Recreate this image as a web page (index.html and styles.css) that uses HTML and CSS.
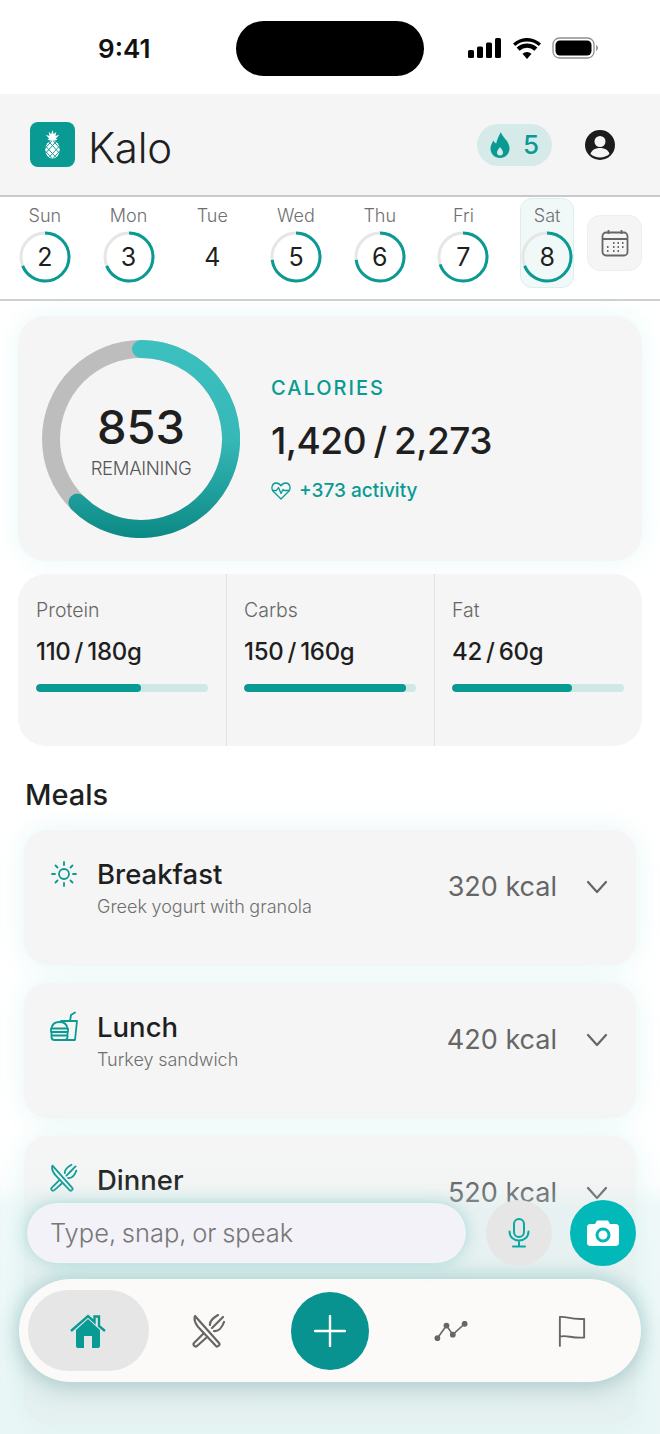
FILE: index.html
```html
<!DOCTYPE html>
<html lang="en">
<head>
  <meta charset="UTF-8">
  <meta name="viewport" content="width=device-width, initial-scale=1.0">
  <title>Kalo</title>
  <link rel="stylesheet" href="styles.css">
</head>
<body>
<div class="phone">
  <!-- Status bar -->
  <div class="status-bar">
    <span class="clock">9:41</span>
    <div class="island"></div>
    <div class="status-icons">
      <svg width="34" height="20" viewBox="0 0 34 20"><rect x="0" y="12" width="6" height="8" rx="1.5"/><rect x="9" y="8.500" width="6" height="11.500" rx="1.5"/><rect x="18" y="4.500" width="6" height="15.500" rx="1.5"/><rect x="27" y="0" width="6" height="20" rx="1.5"/></svg>
      <svg width="28" height="21" viewBox="0 0 28 21"><path d="M14 21l-4.500-5.200a6.500 6.500 0 0 1 9 0z"/><path d="M6.600 12.700l-3-3.300a15.500 15.500 0 0 1 20.800 0l-3 3.300a11 11 0 0 0-14.800 0z"/><path d="M2.300 8L0 5.500a20.500 20.500 0 0 1 28 0L25.700 8a17.500 17.500 0 0 0-23.400 0z"/></svg>
      <svg width="46" height="22" viewBox="0 0 46 22"><rect x="1" y="1" width="41" height="20" rx="6.500" fill="none" stroke="#8f8f8f" stroke-width="1.300"/><rect x="3.500" y="3.500" width="36" height="15" rx="4.500"/><path d="M44 8v6c1.200-.4 2-1.600 2-3s-.8-2.600-2-3z" fill="#9a9a9a"/></svg>
    </div>
  </div>

  <!-- Header -->
  <header class="top-header">
    <div class="brand">
      <div class="logo">
        <svg width="17" height="29" viewBox="0 0 20 34">
          <path d="M10 0l1.500 5 3-3-1 5 4.500-1.500-4 4.500 2 1-4 1.500H8L4 11l2-1-4-4.500L6.500 7l-1-5 3 3z" fill="#fff"/>
          <ellipse cx="10" cy="23" rx="8.500" ry="10.500" fill="#fff"/>
          <path d="M2 19l12 13M2 25l7 8M6 14l12 13M11 13l8 9M18 19L6 32M18 25l-7 8M14 14L2 27M9 13l-8 9" stroke="#0a9a94" stroke-width="1.100"/>
        </svg>
      </div>
      <span class="brand-name">Kalo</span>
    </div>
    <div class="streak">
      <svg width="20" height="26" viewBox="0 0 20 26"><path fill-rule="evenodd" d="M11 0c.6 5 8.500 8.500 8.500 16.500C19.500 22 15.300 26 10 26S.5 22 .5 16.500c0-3.500 1.700-5.500 3-8 .7 1.500 1.500 2.600 2.700 3C7 8 8.500 4 11 0zM10 15c-1.500 2.200-3 3.600-3 5.500a3 3 0 0 0 6 0c0-1.900-1.500-3.300-3-5.500z"/></svg>
      <span>5</span>
    </div>
    <svg class="profile" width="30" height="30" viewBox="0 0 30 30"><circle cx="15" cy="15" r="15" fill="#1c1c1c"/><circle cx="15" cy="11.500" r="5.500" fill="#f5f5f5"/><path d="M5.500 24c1-4 5-6 9.500-6s8.500 2 9.500 6c-2.500 2.300-5.800 3.500-9.500 3.500S8 26.300 5.500 24z" fill="#f5f5f5"/></svg>
  </header>

  <!-- Week strip -->
  <nav class="week">
    <div class="days">
      <div class="day"><span class="day-name">Sun</span><div class="ring"><svg width="52" height="52" viewBox="0 0 52 52"><circle class="ring-track" cx="26" cy="26" r="24"/><circle class="ring-fill" cx="26" cy="26" r="24" pathLength="100" stroke-dasharray="69 100"/></svg><span>2</span></div></div>
      <div class="day"><span class="day-name">Mon</span><div class="ring"><svg width="52" height="52" viewBox="0 0 52 52"><circle class="ring-track" cx="26" cy="26" r="24"/><circle class="ring-fill" cx="26" cy="26" r="24" pathLength="100" stroke-dasharray="69 100"/></svg><span>3</span></div></div>
      <div class="day"><span class="day-name">Tue</span><div class="ring"><span>4</span></div></div>
      <div class="day"><span class="day-name">Wed</span><div class="ring"><svg width="52" height="52" viewBox="0 0 52 52"><circle class="ring-track" cx="26" cy="26" r="24"/><circle class="ring-fill" cx="26" cy="26" r="24" pathLength="100" stroke-dasharray="73 100"/></svg><span>5</span></div></div>
      <div class="day"><span class="day-name">Thu</span><div class="ring"><svg width="52" height="52" viewBox="0 0 52 52"><circle class="ring-track" cx="26" cy="26" r="24"/><circle class="ring-fill" cx="26" cy="26" r="24" pathLength="100" stroke-dasharray="73 100"/></svg><span>6</span></div></div>
      <div class="day"><span class="day-name">Fri</span><div class="ring"><svg width="52" height="52" viewBox="0 0 52 52"><circle class="ring-track" cx="26" cy="26" r="24"/><circle class="ring-fill" cx="26" cy="26" r="24" pathLength="100" stroke-dasharray="70 100"/></svg><span>7</span></div></div>
      <div class="day day-active"><span class="day-name">Sat</span><div class="ring"><svg width="52" height="52" viewBox="0 0 52 52"><circle class="ring-track" cx="26" cy="26" r="24"/><circle class="ring-fill" cx="26" cy="26" r="24" pathLength="100" stroke-dasharray="69 100"/></svg><span>8</span></div></div>
    </div>
    <div class="calendar-btn">
      <svg width="28" height="28" viewBox="0 0 28 28" fill="none" stroke="#666" stroke-width="1.800"><rect x="1.500" y="3.500" width="25" height="23" rx="3.500"/><path d="M1.500 10h25M7.500 1v4M20.500 1v4"/><path d="M12 14h1.500M16.500 14H18M21 14h1.500M6 18h1.500M12 18h1.500M16.500 18H18M21 18h1.500M6 22h1.500M12 22h1.500M16.500 22H18" stroke-width="2"/></svg>
    </div>
  </nav>

  <main class="content">
    <!-- Calories -->
    <section class="card calories">
      <div class="calorie-ring">
        <svg width="198" height="198" viewBox="0 0 198 198" fill="none">
          <defs>
            <linearGradient id="ringGrad" gradientUnits="userSpaceOnUse" x1="99" y1="0" x2="99" y2="198">
              <stop offset="0" stop-color="#3cc0c0"/>
              <stop offset="0.5" stop-color="#36b8b7"/>
              <stop offset="1" stop-color="#0b8985"/>
            </linearGradient>
          </defs>
          <circle cx="99" cy="99" r="90" stroke="#bdbdbd" stroke-width="18"/>
          <path d="M99 9A90 90 0 1 1 35.400 162.600" stroke="url(#ringGrad)" stroke-width="18" stroke-linecap="round"/>
        </svg>
        <div class="ring-label">
          <span class="remaining-num">853</span>
          <span class="remaining-text">REMAINING</span>
        </div>
      </div>
      <div class="calorie-info">
        <span class="calorie-title">CALORIES</span>
        <span class="calorie-total">1,420 / 2,273</span>
        <span class="calorie-activity">
          <svg width="20" height="18" viewBox="0 0 20 18" fill="none" stroke="#0a9a94" stroke-width="1.300" stroke-linejoin="round"><path d="M10 17L2.200 9.200C-.2 6.500 1 1.200 5 1c2.200-.1 3.800.9 5 2.800C11.200 1.900 12.800.9 15 1c4 .2 5.200 5.500 2.800 8.200z"/><path d="M1.500 8.500h4l2-3 2.500 6 2-4 1 1h5"/></svg>
          +373 activity
        </span>
      </div>
    </section>

    <!-- Macros -->
    <section class="card macros">
      <div class="macro">
        <span class="macro-name">Protein</span>
        <span class="macro-value">110 / 180g</span>
        <div class="bar"><div class="bar-fill" style="width: 61%"></div></div>
      </div>
      <div class="macro">
        <span class="macro-name">Carbs</span>
        <span class="macro-value">150 / 160g</span>
        <div class="bar"><div class="bar-fill" style="width: 94%"></div></div>
      </div>
      <div class="macro">
        <span class="macro-name">Fat</span>
        <span class="macro-value">42 / 60g</span>
        <div class="bar"><div class="bar-fill" style="width: 70%"></div></div>
      </div>
    </section>

    <!-- Meals -->
    <h2 class="meals-title">Meals</h2>
    <section class="meals">
      <article class="meal">
        <svg class="meal-icon" width="28" height="28" viewBox="0 0 28 28" fill="none" stroke="#0a9a94" stroke-width="1.800" stroke-linecap="round"><circle cx="14" cy="14" r="5"/><path d="M14 2v3M14 23v3M2 14h3M23 14h3M5.500 5.500l2 2M20.500 20.500l2 2M5.500 22.500l2-2M20.500 7.500l2-2"/></svg>
        <div class="meal-text">
          <span class="meal-name">Breakfast</span>
          <span class="meal-desc">Greek yogurt with granola</span>
        </div>
        <span class="meal-kcal">320 kcal</span>
        <svg class="chevron" width="22" height="14" viewBox="0 0 22 14" fill="none" stroke="#666" stroke-width="2.200" stroke-linecap="round" stroke-linejoin="round"><path d="M2 2l9 10 9-10"/></svg>
      </article>
      <article class="meal">
        <svg class="meal-icon meal-icon-up" width="28" height="30" viewBox="0 0 28 30" fill="none" stroke="#0a9a94" stroke-width="1.800" stroke-linecap="round" stroke-linejoin="round"><path d="M11 10h16l-2 19H16M20 10l1-6 4-2.500"/><path d="M1.500 17.500C2 13.500 5 11 9.500 11s7.500 2.500 8 6.500zM1 17.500h17V21H1zM1.500 21v5c0 1.700 1.300 3 3 3h10c1.700 0 3-1.300 3-3v-5M1.500 24.500h16"/></svg>
        <div class="meal-text">
          <span class="meal-name">Lunch</span>
          <span class="meal-desc">Turkey sandwich</span>
        </div>
        <span class="meal-kcal">420 kcal</span>
        <svg class="chevron" width="22" height="14" viewBox="0 0 22 14" fill="none" stroke="#666" stroke-width="2.200" stroke-linecap="round" stroke-linejoin="round"><path d="M2 2l9 10 9-10"/></svg>
      </article>
      <article class="meal meal-last">
        <svg class="meal-icon meal-icon-up" width="28" height="28" viewBox="0 0 34 34" fill="none" stroke="#0a9a94" stroke-width="2.200" stroke-linecap="round" stroke-linejoin="round"><path d="M3 2C1.500 6.500 4 11 8 15l16 17c1.500 1.500 4.500-1 3-3z"/><path d="M11 20L2 29c-1.500 2 1 4.500 3 3l9-8M20 14l11-11M22 17c4 .5 8-3 10-9M18 11c-.5-3 3-7 8-10M24 10l5-5"/></svg>
        <div class="meal-text">
          <span class="meal-name">Dinner</span>
        </div>
        <span class="meal-kcal">520 kcal</span>
        <svg class="chevron" width="22" height="14" viewBox="0 0 22 14" fill="none" stroke="#666" stroke-width="2.200" stroke-linecap="round" stroke-linejoin="round"><path d="M2 2l9 10 9-10"/></svg>
      </article>
    </section>
  </main>

  <!-- Input and tab bar, over the list -->
  <div class="dock">
    <div class="composer">
      <div class="composer-input">Type, snap, or speak</div>
      <div class="round-btn mic-btn">
        <svg width="22" height="30" viewBox="0 0 22 30" fill="none" stroke="#08a8a6" stroke-width="2" stroke-linecap="round"><rect x="6" y="1" width="10" height="18" rx="5"/><path d="M1.500 13.500c0 5.500 4 9 9.500 9s9.500-3.500 9.500-9M11 22.500V28M5 28.500h12"/></svg>
      </div>
      <div class="round-btn camera-btn">
        <svg width="32" height="26" viewBox="0 0 32 26"><path fill="#fff" fill-rule="evenodd" d="M3 4h5l2-3.500h11L23 4h6c1.600 0 3 1.400 3 3v16c0 1.600-1.400 3-3 3H3c-1.600 0-3-1.400-3-3V7c0-1.600 1.400-3 3-3zm13 3.500a7.500 7.500 0 1 0 0 15 7.500 7.500 0 0 0 0-15zm0 3a4.500 4.500 0 1 1 0 9 4.500 4.500 0 0 1 0-9z"/></svg>
      </div>
    </div>
    <div class="tabbar">
      <div class="tab tab-active">
        <svg width="36" height="34" viewBox="0 0 36 34"><path fill="#0a9a94" d="M6 16L18 5l12 11v16c0 1-.8 2-2 2h-6V22h-8v12H8c-1.200 0-2-1-2-2z"/><path d="M1 17L18 2l6.500 6V2.500H29V12l6 5" fill="none" stroke="#0a9a94" stroke-width="2.400"/></svg>
      </div>
      <div class="tab">
        <svg width="34" height="34" viewBox="0 0 34 34" fill="none" stroke="#666" stroke-width="2.200" stroke-linecap="round" stroke-linejoin="round"><path d="M3 2C1.500 6.500 4 11 8 15l16 17c1.500 1.500 4.500-1 3-3z"/><path d="M11 20L2 29c-1.500 2 1 4.500 3 3l9-8M20 14l11-11M22 17c4 .5 8-3 10-9M18 11c-.5-3 3-7 8-10M24 10l5-5"/></svg>
      </div>
      <div class="tab">
        <div class="plus-btn">
          <svg width="32" height="32" viewBox="0 0 32 32" stroke="#fff" stroke-width="2.400" stroke-linecap="round"><path d="M16 1v30M1 16h30"/></svg>
        </div>
      </div>
      <div class="tab">
        <svg width="34" height="20" viewBox="0 0 36 22" fill="none" stroke="#666" stroke-width="1.800"><path d="M3 19l10-14 7 10L33 3"/><circle cx="3" cy="19" r="2.300" fill="#666"/><circle cx="13" cy="5" r="2.300" fill="#666"/><circle cx="20" cy="15" r="2.300" fill="#666"/><circle cx="33" cy="3" r="2.300" fill="#666"/></svg>
      </div>
      <div class="tab">
        <svg width="28" height="32" viewBox="0 0 30 34" fill="none" stroke="#666" stroke-width="2" stroke-linecap="round" stroke-linejoin="round"><path d="M2 33V2c8-1 10 3 26 2v20c-14 1-18-3-26-1"/></svg>
      </div>
    </div>
  </div>
</div>
</body>
</html>
```

FILE: styles.css
```css
* {
  margin: 0;
  padding: 0;
  box-sizing: border-box;
}

body {
  background-color: #fff;
  font-family: Inter, "Liberation Sans", sans-serif;
  color: #1f1f1f;
}

.phone {
  position: relative;
  width: 660px;
  height: 1434px;
  overflow: hidden;
  background-color: #fff;
}

/* Status bar */
.status-bar {
  display: flex;
  align-items: center;
  height: 94px;
  padding: 2px 62px 0 98px;
}

.clock {
  width: 138px;
  font-size: 26px;
  font-weight: 600;
  color: #111;
}

.island {
  width: 188px;
  height: 55px;
  background-color: #000;
  border-radius: 28px;
}

.status-icons {
  display: flex;
  align-items: center;
  gap: 11px;
  margin-left: 44px;
}

/* Header */
.top-header {
  display: flex;
  align-items: center;
  height: 103px;
  padding: 0 45px 0 30px;
  background-color: #f5f5f5;
  border-bottom: 2px solid #c9c9c9;
}

.brand {
  display: flex;
  align-items: center;
  gap: 13px;
  flex: 1;
}

.logo {
  display: flex;
  align-items: center;
  justify-content: center;
  width: 45px;
  height: 45px;
  background-color: #0a9a94;
  border-radius: 8px;
}

.brand-name {
  font-size: 42px;
  font-weight: 300;
  letter-spacing: -0.3px;
  padding-top: 5px;
}

.streak {
  display: flex;
  align-items: center;
  justify-content: center;
  gap: 13px;
  width: 75px;
  height: 42px;
  margin-right: 33px;
  background-color: #d5eae9;
  border-radius: 21px;
  color: #0a9a94;
  font-size: 26px;
  font-weight: 500;
}

.streak svg {
  fill: #0a9a94;
}

/* Week strip */
.week {
  display: flex;
  align-items: flex-start;
  height: 104px;
  padding: 1px 18px 0 3px;
  border-bottom: 2px solid #cfcfcf;
}

.days {
  display: grid;
  grid-template-columns: repeat(7, 1fr);
  width: 586px;
  flex: none;
}

.day {
  display: flex;
  flex-direction: column;
  align-items: center;
  gap: 4px;
  width: 54px;
  height: 90px;
  padding-top: 6px;
  justify-self: center;
  border: 1px solid transparent;
  border-radius: 12px;
}

.day-active {
  background-color: #f0f9f8;
  border-color: #dcefee;
}

.day-name {
  font-size: 18px;
  font-weight: 300;
  line-height: 22px;
  color: #6f6f6f;
}

.ring {
  position: relative;
  display: flex;
  align-items: center;
  justify-content: center;
  width: 52px;
  height: 52px;
  flex: none;
  font-size: 25px;
  font-weight: 400;
}

.ring svg {
  position: absolute;
  top: 0;
  left: 0;
  transform: rotate(-90deg);
}

.ring-track,
.ring-fill {
  fill: none;
  stroke-width: 3;
}

.ring-track {
  stroke: #e6e6e6;
}

.ring-fill {
  stroke: #0a9a94;
}

.calendar-btn {
  display: flex;
  align-items: center;
  justify-content: center;
  width: 55px;
  height: 56px;
  margin: 17px 0 0 -2px;
  background-color: #f5f5f5;
  border: 1px solid #eeeeee;
  border-radius: 13px;
}

/* Cards */
.content {
  padding: 15px 18px 0;
}

.card {
  background-color: #f5f5f5;
  border-radius: 28px;
}

.calories {
  display: flex;
  align-items: center;
  gap: 31px;
  height: 245px;
  padding: 0 24px;
  box-shadow: 0 0 24px rgba(200, 240, 238, 0.4);
}

.calorie-ring {
  position: relative;
  width: 198px;
  height: 198px;
  flex: none;
}

.ring-label {
  position: absolute;
  top: 0;
  left: 0;
  right: 0;
  bottom: 0;
  display: flex;
  flex-direction: column;
  align-items: center;
  justify-content: center;
}

.remaining-num {
  font-size: 47px;
  font-weight: 500;
  line-height: 58px;
}

.remaining-text {
  font-size: 18.500px;
  font-weight: 300;
  line-height: 24px;
  letter-spacing: -0.3px;
  color: #555;
}

.calorie-info {
  display: flex;
  flex-direction: column;
  margin-top: 2px;
}

.calorie-title {
  font-size: 20px;
  font-weight: 500;
  letter-spacing: 2px;
  color: #0a9a94;
  line-height: 24px;
}

.calorie-total {
  font-size: 37px;
  font-weight: 500;
  line-height: 44px;
  margin-top: 19px;
  letter-spacing: -0.5px;
  word-spacing: -2px;
}

.calorie-activity {
  display: flex;
  align-items: center;
  gap: 8px;
  margin-top: 15px;
  font-size: 19px;
  font-weight: 500;
  line-height: 26px;
  color: #0a9a94;
}

.macros {
  display: grid;
  grid-template-columns: repeat(3, 1fr);
  height: 172px;
  margin-top: 13px;
}

.macro {
  display: flex;
  flex-direction: column;
  padding: 24px 18px 0 17px;
  border-left: 1px solid #e2e2e2;
}

.macro:first-child {
  padding-left: 18px;
  border-left: none;
}

.macro-name {
  font-size: 19.500px;
  font-weight: 300;
  line-height: 24px;
  color: #666;
}

.macro-value {
  font-size: 24px;
  font-weight: 500;
  line-height: 28px;
  margin-top: 16px;
  letter-spacing: -0.3px;
  word-spacing: -2px;
}

.bar {
  height: 8px;
  margin-top: 18px;
  background-color: #cfe8e6;
  border-radius: 4px;
  overflow: hidden;
}

.bar-fill {
  height: 100%;
  background-color: #0a9a94;
  border-radius: 4px;
}

.meals-title {
  font-size: 29px;
  font-weight: 500;
  line-height: 36px;
  margin: 31px 0 0 7px;
}

/* Meals */
.meals {
  display: flex;
  flex-direction: column;
  gap: 18px;
  margin: 17px 6px 0;
}

.meal {
  display: flex;
  align-items: flex-start;
  height: 135px;
  padding: 27px 28px 0 26px;
  background-color: #f5f5f5;
  border-radius: 24px;
  box-shadow: 0 0 26px rgba(200, 236, 236, 0.45);
}

.meal-last {
  height: 288px;
}

.meal-icon {
  flex: none;
  margin-top: 3px;
}

.meal-icon-up {
  margin-top: 1px;
}

.meal-text {
  display: flex;
  flex-direction: column;
  flex: 1;
  margin-left: 19px;
}

.meal-name {
  font-size: 27.500px;
  font-weight: 500;
  line-height: 34px;
}

.meal-desc {
  font-size: 18px;
  font-weight: 300;
  line-height: 22px;
  margin-top: 5px;
  word-spacing: -0.5px;
  color: #6f6f6f;
}

.meal-kcal {
  margin-top: 13px;
  font-size: 27px;
  line-height: 34px;
  color: #666;
}

.chevron {
  margin: 23px 0 0 29px;
}

/* Dock */
.dock {
  position: absolute;
  left: 0;
  right: 0;
  bottom: 0;
  height: 290px;
  padding-top: 56px;
  background: linear-gradient(to bottom, rgba(200, 232, 231, 0) 0, rgba(200, 232, 231, 0.05) 40px, rgba(200, 232, 231, 0.28) 62px, rgba(205, 235, 233, 0.45) 100%);
}

.composer {
  display: flex;
  align-items: center;
  gap: 18px;
  padding: 0 24px 0 26px;
}

.composer-input {
  flex: 1;
  height: 62px;
  margin-right: 1px;
  padding-left: 23px;
  background-color: #f2f2f8;
  border: 1px solid #c4e6e4;
  border-radius: 31px;
  box-shadow: 0 0 16px rgba(130, 200, 198, 0.55);
  font-size: 25.500px;
  font-weight: 300;
  line-height: 60px;
  word-spacing: -1.500px;
  color: #777;
}

.round-btn {
  display: flex;
  align-items: center;
  justify-content: center;
  width: 66px;
  height: 66px;
  flex: none;
  border-radius: 50%;
}

.mic-btn {
  background-color: #e6e6e6;
}

.camera-btn {
  background-color: #02b8b8;
}

.tabbar {
  display: grid;
  grid-template-columns: repeat(5, 1fr);
  align-items: center;
  height: 103px;
  margin: 13px 19px 0;
  padding: 0 9px;
  background-color: #fbfaf9;
  border-radius: 52px;
  box-shadow: 0 8px 22px rgba(90, 140, 140, 0.3), 0 -6px 18px rgba(120, 195, 192, 0.35);
}

.tab {
  display: flex;
  align-items: center;
  justify-content: center;
  height: 81px;
}

.tab-active {
  background-color: #e6e6e6;
  border-radius: 41px;
}

.plus-btn {
  display: flex;
  align-items: center;
  justify-content: center;
  width: 78px;
  height: 78px;
  background-color: #089390;
  border-radius: 50%;
}
```
